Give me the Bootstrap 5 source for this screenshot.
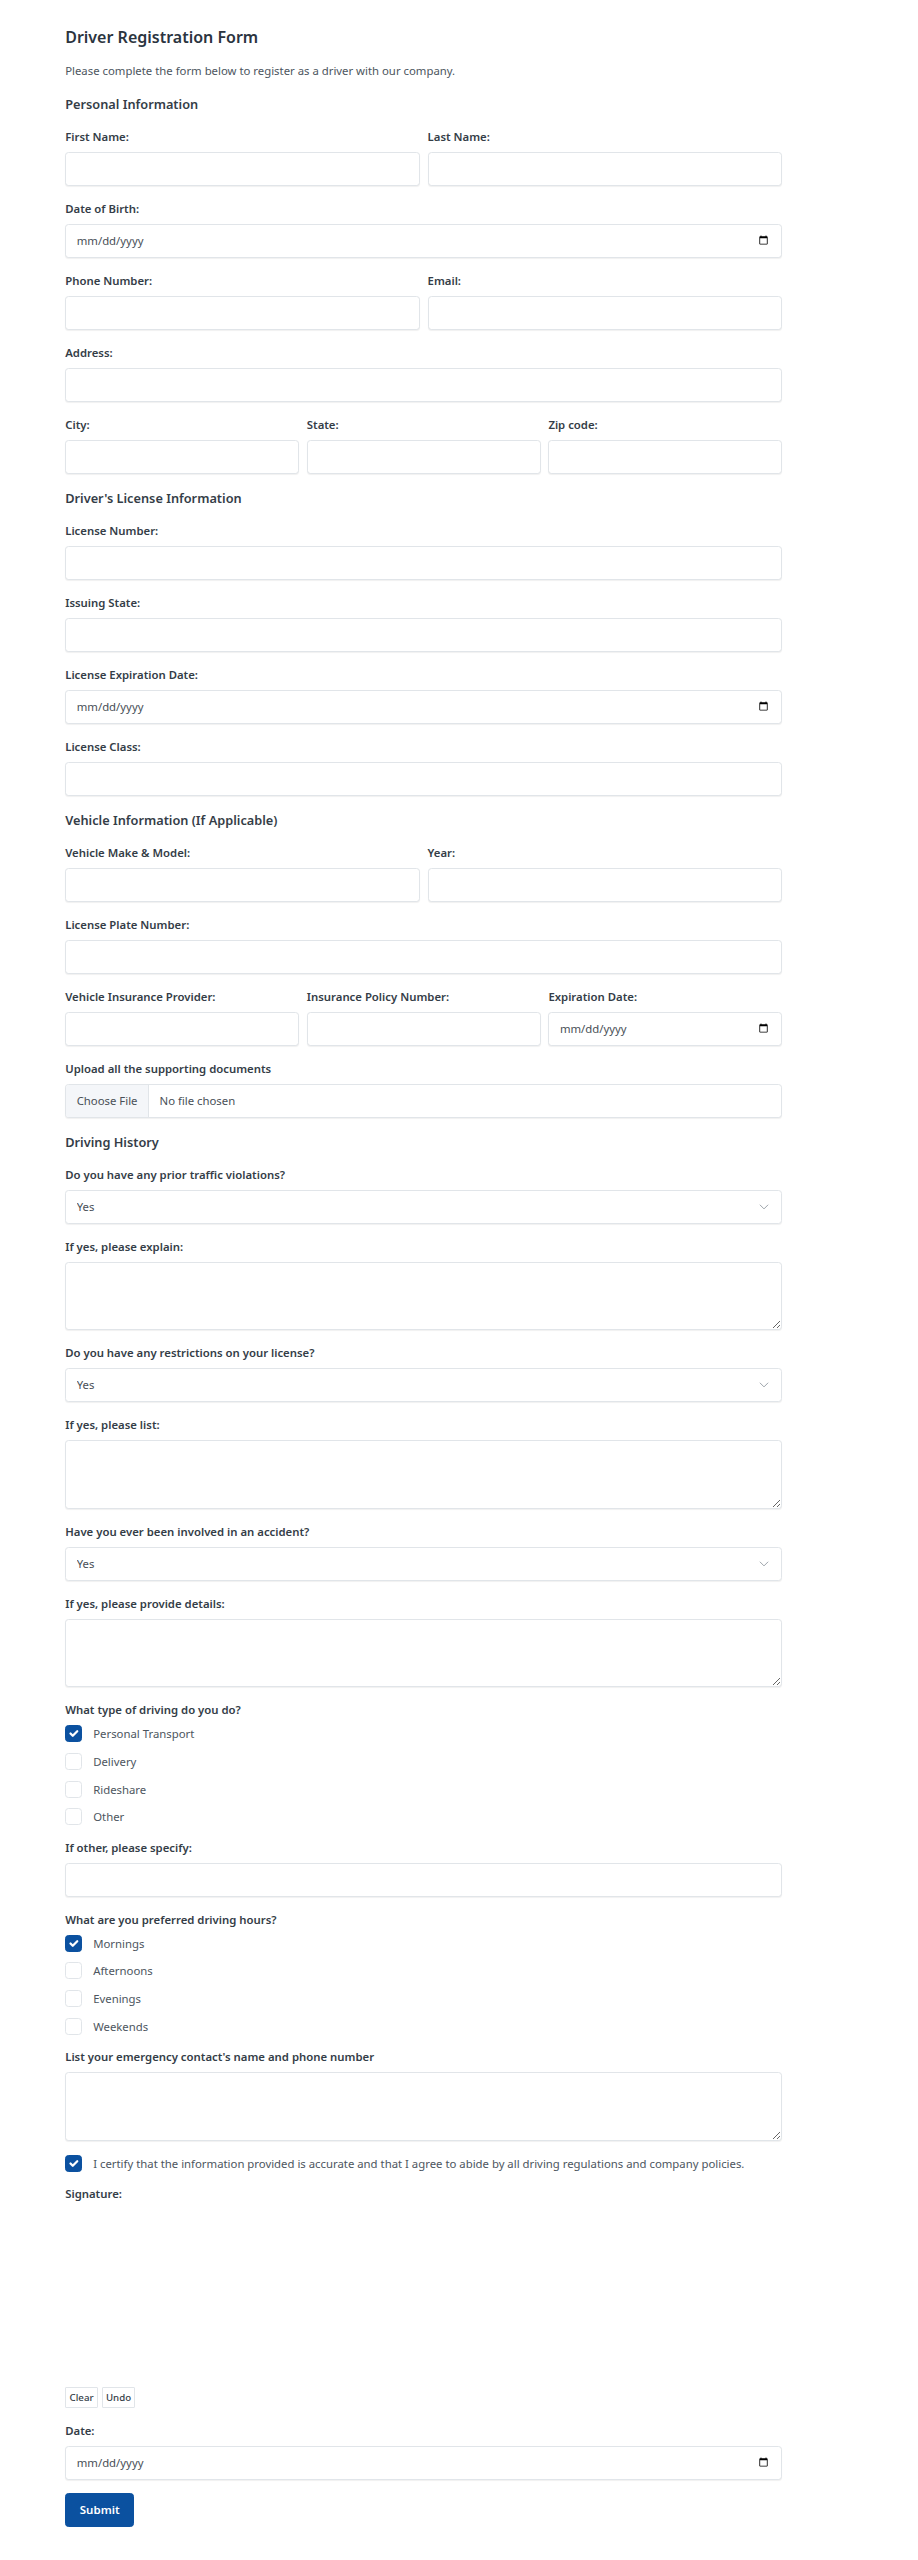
<!DOCTYPE html>
<html lang="en">
<head>
<meta charset="utf-8">
<title>Driver Registration Form</title>
<link href="https://cdn.jsdelivr.net/npm/bootstrap@5.3.0/dist/css/bootstrap.min.css" rel="stylesheet">
<style>
body{font-family:"Noto Sans","Open Sans",sans-serif;font-size:11.35px;color:#343a40;background:#fff}
.form-wrap{width:717.3px;margin:0 0 0 65.2px;padding-top:25.7px}
.form-title{font-size:16px;font-weight:600;line-height:22px;margin:0 0 14px;color:#2b3440}
.form-intro{font-size:11.35px;line-height:18px;margin:0 0 14px;color:#4d5660}
.sect-title{font-size:12.75px;font-weight:600;line-height:20px;margin:0 0 14px;color:#343d47}
.fld-row{--bs-gutter-x:7.5px}
.fld{margin-bottom:14px}
.fld-last{margin-bottom:13px}
.form-label{font-size:11.35px;font-weight:600;line-height:17px;margin-bottom:7px;color:#343d47;display:block}
.form-control,.form-select{font-size:11.35px;line-height:18px;height:34px;padding:7px 10.5px;border:1px solid #e1e5e9;border-radius:3.5px;color:#495057;box-shadow:0 1px 1px rgba(0,0,0,.06)}
.form-select{background-image:url("data:image/svg+xml,%3csvg xmlns='http://www.w3.org/2000/svg' viewBox='0 0 16 16'%3e%3cpath fill='none' stroke='%239aa1a8' stroke-width='1.3' d='M2.500 5l5.500 5.500L13.500 5'/%3e%3c/svg%3e");background-size:12px 12px;background-position:right 11px center}
textarea.form-control{height:68.5px}
.form-control::file-selector-button{padding:7px 10.5px;margin:-7px 10.5px -7px -10.5px;background:#f4f6f9;color:#495057;border-inline-end-width:1px;border-color:#e1e5e9}
.check-rows{margin-bottom:13.5px}
.form-check{display:flex;align-items:center;min-height:17px;padding:0;margin:0 0 10.7px;gap:11px}
.form-check:last-child{margin-bottom:0}
.form-check .form-check-input{width:17px;height:17px;margin:0;float:none;flex:none;border:1px solid #e1e5e9;border-radius:3.5px}
.form-check .form-check-input:checked{background-color:#0b51a0;border-color:#0b51a0}
.form-check-label{font-size:11.35px;line-height:17px;color:#4d5660}
.sign-area{height:178px}
.sign-btns{display:flex;gap:3.6px;margin-bottom:14px}
.sign-btn{font-size:9.7px;line-height:14px;padding:2px 3.4px;border:1px solid #e1e5e9;border-radius:1px;background:#fff;color:#343d47;height:20.4px;font-weight:500}
.send-btn{font-size:11.5px;font-weight:600;line-height:18px;padding:7.35px 13.6px;border-radius:3.5px;background:#0b51a0;border-color:#0b51a0;color:#fff}
</style>
</head>
<body>
<form class="form-wrap">
<h1 class="form-title">Driver Registration Form</h1>
<p class="form-intro">Please complete the form below to register as a driver with our company.</p>

<h2 class="sect-title">Personal Information</h2>
<div class="row fld-row">
<div class="col-6 fld"><label class="form-label">First Name:</label><input type="text" class="form-control"></div>
<div class="col-6 fld"><label class="form-label">Last Name:</label><input type="text" class="form-control"></div>
</div>
<div class="fld"><label class="form-label">Date of Birth:</label><input type="date" class="form-control"></div>
<div class="row fld-row">
<div class="col-6 fld"><label class="form-label">Phone Number:</label><input type="tel" class="form-control"></div>
<div class="col-6 fld"><label class="form-label">Email:</label><input type="email" class="form-control"></div>
</div>
<div class="fld"><label class="form-label">Address:</label><input type="text" class="form-control"></div>
<div class="row fld-row">
<div class="col-4 fld"><label class="form-label">City:</label><input type="text" class="form-control"></div>
<div class="col-4 fld"><label class="form-label">State:</label><input type="text" class="form-control"></div>
<div class="col-4 fld"><label class="form-label">Zip code:</label><input type="text" class="form-control"></div>
</div>

<h2 class="sect-title">Driver's License Information</h2>
<div class="fld"><label class="form-label">License Number:</label><input type="text" class="form-control"></div>
<div class="fld"><label class="form-label">Issuing State:</label><input type="text" class="form-control"></div>
<div class="fld"><label class="form-label">License Expiration Date:</label><input type="date" class="form-control"></div>
<div class="fld"><label class="form-label">License Class:</label><input type="text" class="form-control"></div>

<h2 class="sect-title">Vehicle Information (If Applicable)</h2>
<div class="row fld-row">
<div class="col-6 fld"><label class="form-label">Vehicle Make &amp; Model:</label><input type="text" class="form-control"></div>
<div class="col-6 fld"><label class="form-label">Year:</label><input type="text" class="form-control"></div>
</div>
<div class="fld"><label class="form-label">License Plate Number:</label><input type="text" class="form-control"></div>
<div class="row fld-row">
<div class="col-4 fld"><label class="form-label">Vehicle Insurance Provider:</label><input type="text" class="form-control"></div>
<div class="col-4 fld"><label class="form-label">Insurance Policy Number:</label><input type="text" class="form-control"></div>
<div class="col-4 fld"><label class="form-label">Expiration Date:</label><input type="date" class="form-control"></div>
</div>
<div class="fld"><label class="form-label">Upload all the supporting documents</label><input type="file" class="form-control"></div>

<h2 class="sect-title">Driving History</h2>
<div class="fld"><label class="form-label">Do you have any prior traffic violations?</label><select class="form-select"><option>Yes</option><option>No</option></select></div>
<div class="fld"><label class="form-label">If yes, please explain:</label><textarea class="form-control"></textarea></div>
<div class="fld"><label class="form-label">Do you have any restrictions on your license?</label><select class="form-select"><option>Yes</option><option>No</option></select></div>
<div class="fld"><label class="form-label">If yes, please list:</label><textarea class="form-control"></textarea></div>
<div class="fld"><label class="form-label">Have you ever been involved in an accident?</label><select class="form-select"><option>Yes</option><option>No</option></select></div>
<div class="fld"><label class="form-label">If yes, please provide details:</label><textarea class="form-control"></textarea></div>

<label class="form-label">What type of driving do you do?</label>
<div class="check-rows">
<div class="form-check"><input class="form-check-input" type="checkbox" checked><label class="form-check-label">Personal Transport</label></div>
<div class="form-check"><input class="form-check-input" type="checkbox"><label class="form-check-label">Delivery</label></div>
<div class="form-check"><input class="form-check-input" type="checkbox"><label class="form-check-label">Rideshare</label></div>
<div class="form-check"><input class="form-check-input" type="checkbox"><label class="form-check-label">Other</label></div>
</div>
<div class="fld"><label class="form-label">If other, please specify:</label><input type="text" class="form-control"></div>

<label class="form-label">What are you preferred driving hours?</label>
<div class="check-rows">
<div class="form-check"><input class="form-check-input" type="checkbox" checked><label class="form-check-label">Mornings</label></div>
<div class="form-check"><input class="form-check-input" type="checkbox"><label class="form-check-label">Afternoons</label></div>
<div class="form-check"><input class="form-check-input" type="checkbox"><label class="form-check-label">Evenings</label></div>
<div class="form-check"><input class="form-check-input" type="checkbox"><label class="form-check-label">Weekends</label></div>
</div>
<div class="fld"><label class="form-label">List your emergency contact's name and phone number</label><textarea class="form-control"></textarea></div>

<div class="check-rows">
<div class="form-check"><input class="form-check-input" type="checkbox" checked><label class="form-check-label">I certify that the information provided is accurate and that I agree to abide by all driving regulations and company policies.</label></div>
</div>
<label class="form-label">Signature:</label>
<div class="sign-area"></div>
<div class="sign-btns"><button type="button" class="sign-btn">Clear</button><button type="button" class="sign-btn">Undo</button></div>
<div class="fld-last"><label class="form-label">Date:</label><input type="date" class="form-control"></div>
<button type="submit" class="btn btn-primary send-btn">Submit</button>
</form>
<script src="https://cdn.jsdelivr.net/npm/bootstrap@5.3.0/dist/js/bootstrap.bundle.min.js"></script>
</body>
</html>
